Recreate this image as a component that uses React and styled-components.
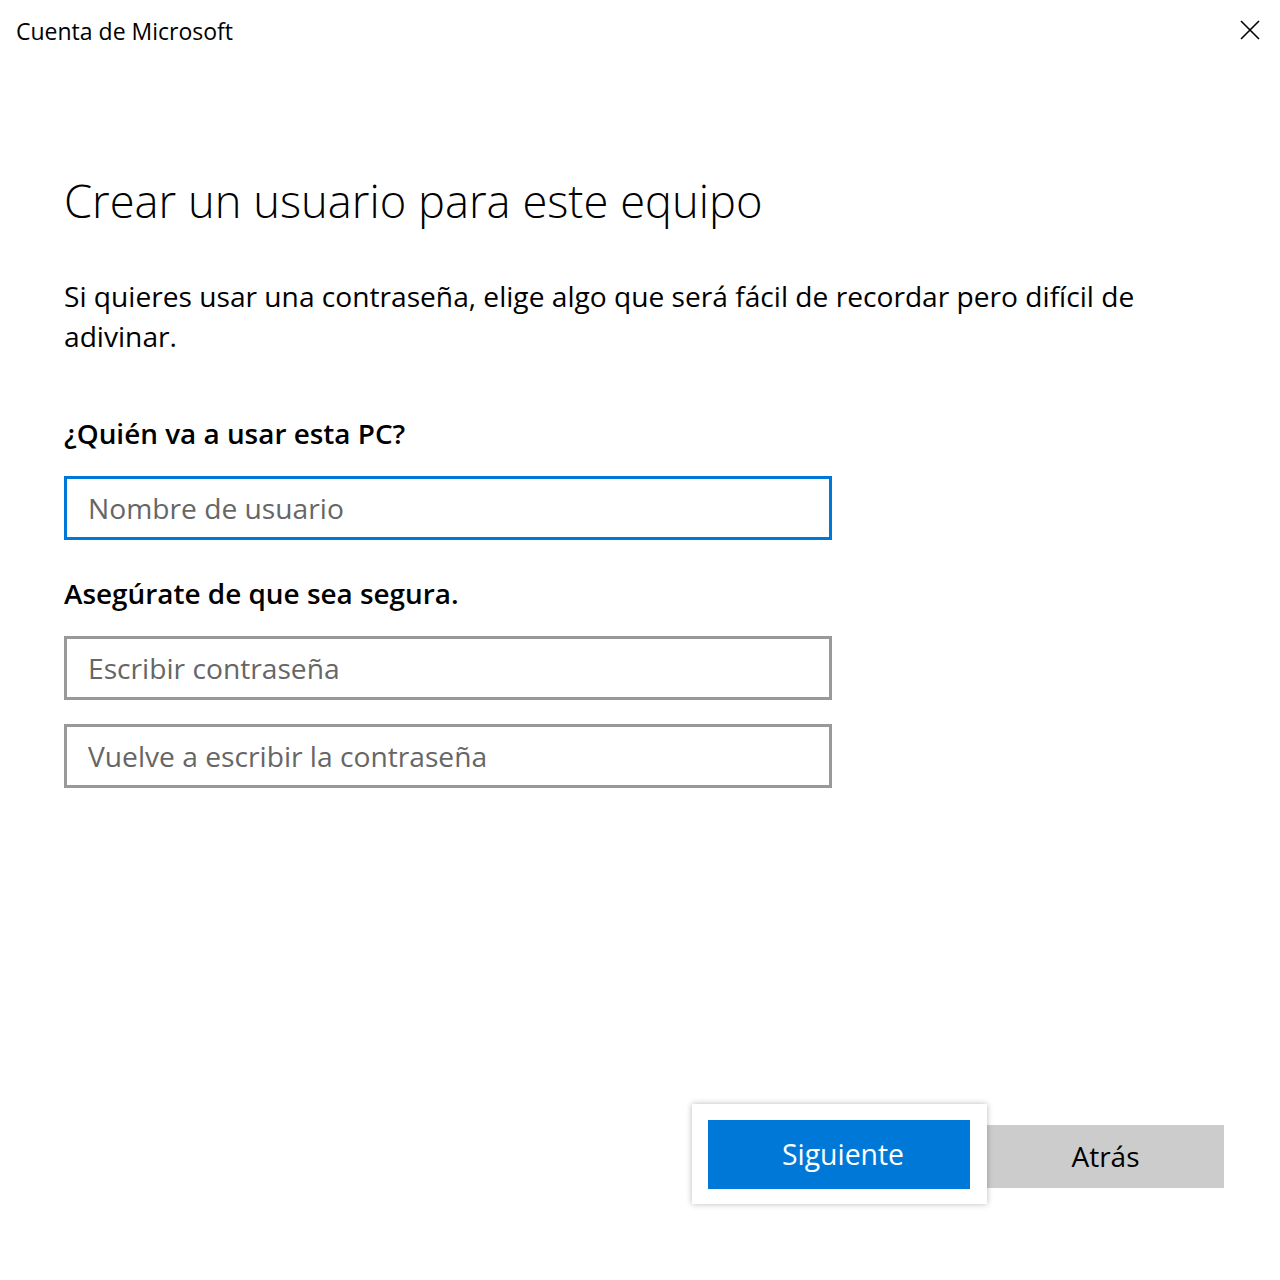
import React from "react";
import styled, { createGlobalStyle } from "styled-components";

const Global = createGlobalStyle`
  html, body { margin: 0; padding: 0; background: #fff; }
  body { font-family: "Open Sans", "Noto Sans", sans-serif; color: #000; }
  * { box-sizing: border-box; }
`;

const Page = styled.div`
  width: 1280px;
  min-height: 1280px;
  display: flex;
  flex-direction: column;
  background: #fff;
`;

const TitleBar = styled.header`
  height: 60px;
  display: flex;
  align-items: center;
  justify-content: space-between;
  padding: 2px 16px 0 16px;
`;

const WindowTitle = styled.div`
  font-size: 23px;
  color: #000;
`;

const CloseButton = styled.button`
  width: 30px;
  height: 30px;
  border: 0;
  background: transparent;
  display: flex;
  align-items: center;
  justify-content: center;
  padding: 0;
  margin-right: -1px;
  margin-top: -2px;
  cursor: pointer;
`;

const Main = styled.main`
  padding: 111px 64px 0 64px;
  display: flex;
  flex-direction: column;
`;

const Heading = styled.h1`
  margin: 0;
  font-weight: 300;
  font-size: 45.3px;
  line-height: 60px;
`;

const Description = styled.p`
  margin: 45px 0 0 0;
  font-size: 28.15px;
  line-height: 40px;
  max-width: 1100px;
`;

const Label = styled.label`
  display: block;
  margin-top: ${(p) => p.$mt}px;
  font-size: 27.9px;
  line-height: 40px;
  font-weight: 600;
`;

const Input = styled.input`
  display: block;
  width: 768px;
  height: 64px;
  margin-top: ${(p) => p.$mt}px;
  border: 3px solid ${(p) => (p.$focused ? "#0078d7" : "#999999")};
  padding: 0 21px;
  font-family: inherit;
  font-size: 28.2px;
  color: #000;
  outline: none;
  background: #fff;
  &::placeholder { color: #666666; opacity: 1; }
`;

const Footer = styled.footer`
  margin-top: auto;
  padding: 0 56px 76px 0;
  display: flex;
  justify-content: flex-end;
  align-items: center;
`;

const FocusFrame = styled.div`
  padding: 16px 17px 15px 16px;
  background: #fff;
  box-shadow: 0 0 6px rgba(0, 0, 0, 0.28);
  position: relative;
  z-index: 1;
`;

const PrimaryButton = styled.button`
  width: 262px;
  height: 69px;
  border: 0;
  background: #0078d7;
  color: #fff;
  font-family: inherit;
  font-size: 28.4px;
  display: flex;
  align-items: center;
  justify-content: center;
  padding: 0 0 1px 8px;
`;

const SecondaryButton = styled.button`
  width: 237px;
  height: 63px;
  border: 0;
  background: #cccccc;
  color: #000;
  font-family: inherit;
  font-size: 28px;
  display: flex;
  align-items: center;
  justify-content: center;
  margin-top: 4px;
  padding: 0;
`;

export default function App() {
  return (
    <Page>
      <Global />
      <TitleBar>
        <WindowTitle>Cuenta de Microsoft</WindowTitle>
        <CloseButton aria-label="Cerrar">
          <svg width="20" height="20" viewBox="0 0 20 20">
            <path d="M1 1 L19 19 M19 1 L1 19" stroke="#000" strokeWidth="1.6" fill="none" />
          </svg>
        </CloseButton>
      </TitleBar>
      <Main>
        <Heading>Crear un usuario para este equipo</Heading>
        <Description>
          Si quieres usar una contraseña, elige algo que será fácil de recordar pero difícil de adivinar.
        </Description>
        <Label $mt={57}>¿Quién va a usar esta PC?</Label>
        <Input $mt={23} $focused placeholder="Nombre de usuario" />
        <Label $mt={33}>Asegúrate de que sea segura.</Label>
        <Input $mt={23} type="password" placeholder="Escribir contraseña" />
        <Input $mt={24} type="password" placeholder="Vuelve a escribir la contraseña" />
      </Main>
      <Footer>
        <FocusFrame>
          <PrimaryButton>Siguiente</PrimaryButton>
        </FocusFrame>
        <SecondaryButton>Atrás</SecondaryButton>
      </Footer>
    </Page>
  );
}
